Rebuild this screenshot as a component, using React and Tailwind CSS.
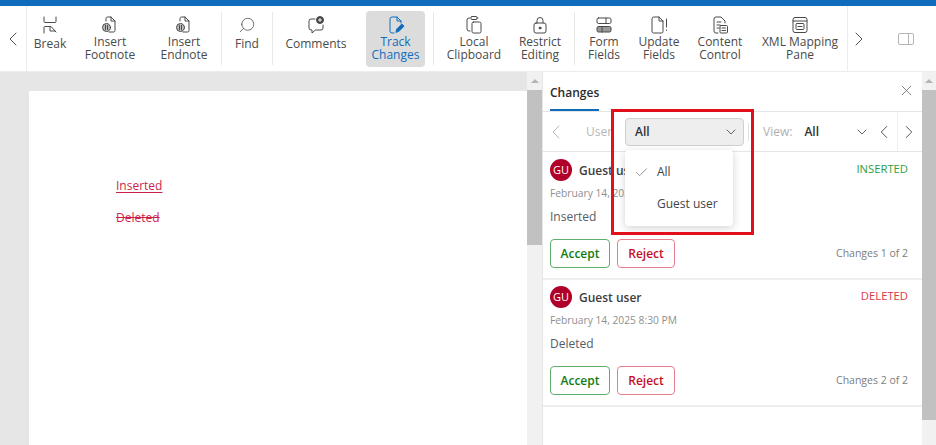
import React from "react";
import { ChevronLeft, ChevronRight, ChevronDown, Check, X, Search } from "lucide-react";

const FONT = { fontFamily: '"Open Sans", "Noto Sans", sans-serif' };

const Glyph = ({ children, color = "#4a4a4a" }) => (
  <svg width="20" height="20" viewBox="0 0 20 20" fill="none" stroke={color} strokeWidth="1" strokeLinecap="round" strokeLinejoin="round">
    {children}
  </svg>
);

const NoteIcon = () => (
  <Glyph>
    <path d="M6 6V3.5a1.5 1.5 0 0 1 1.5-1.5H11l4 4v9.5a1.5 1.5 0 0 1-1.5 1.5H9" />
    <path d="M11 2v4h4" />
    <circle cx="6.5" cy="12.5" r="4" fill="#bbb" />
    <path d="M5.5 10.5v4M7.5 10.5v4" />
  </Glyph>
);

const icons = {
  break: (
    <Glyph>
      <path d="M4 2v4.5a1 1 0 0 0 1 1h10a1 1 0 0 0 1-1V2" />
      <path d="M4 18v-5.5a1 1 0 0 1 1-1h6l5 5.5" />
      <path d="M10 12v4h5" />
    </Glyph>
  ),
  note: <NoteIcon />,
  comments: (
    <Glyph>
      <path d="M9 4H5a2 2 0 0 0-2 2v7a2 2 0 0 0 2 2h1v3l3.5-3H15a2 2 0 0 0 2-2v-3" />
      <circle cx="14" cy="5" r="3.5" fill="#444" />
      <path d="M12.5 5h3M14 3.5v3" stroke="#fff" />
    </Glyph>
  ),
  track: (
    <Glyph color="#0f6cbd">
      <path d="M8 18H6a2 2 0 0 1-2-2V4a2 2 0 0 1 2-2h5l4 4v2" />
      <path d="M11 2v4h4" />
      <path d="M10 17l.8-3 5-5 2.2 2.2-5 5z" fill="#0f6cbd" />
    </Glyph>
  ),
  clipboard: (
    <Glyph>
      <path d="M6 16H5a2 2 0 0 1-2-2V5a2 2 0 0 1 2-2h1" />
      <path d="M14 3h-1" />
      <rect x="7" y="1.5" width="6" height="3" rx="1" />
      <rect x="8" y="7" width="9" height="11" rx="1.5" />
    </Glyph>
  ),
  lock: (
    <Glyph>
      <rect x="4" y="8" width="12" height="10" rx="2" />
      <path d="M7 8V5.5a3 3 0 0 1 6 0V8" />
      <circle cx="10" cy="13" r="1" fill="#4a4a4a" />
    </Glyph>
  ),
  form: (
    <Glyph>
      <rect x="3" y="3" width="14" height="5.5" rx="1.5" />
      <rect x="3" y="11.5" width="14" height="5.5" rx="1.5" fill="#999" />
      <path d="M12 3v5.5M8 11.5V17" />
    </Glyph>
  ),
  update: (
    <Glyph>
      <path d="M3 3.5A1.5 1.5 0 0 1 4.5 2H10l4 4v10.5a1.5 1.5 0 0 1-1.5 1.5h-8A1.5 1.5 0 0 1 3 16.5z" />
      <path d="M10 2v4h4" />
      <path d="M17.5 4v8M17.5 15v.5" />
    </Glyph>
  ),
  content: (
    <Glyph>
      <path d="M8 18H6a2 2 0 0 1-2-2V4a2 2 0 0 1 2-2h5l4 4v2" />
      <path d="M7 7h4M7 10h3M7 13h2" />
      <rect x="10" y="10.5" width="7.5" height="7.5" rx="1" />
      <path d="M12 13h3.5M12 15.5h3.5" />
    </Glyph>
  ),
  xml: (
    <Glyph>
      <rect x="3" y="2.5" width="14" height="15" rx="2" />
      <path d="M3 6h14" />
      <rect x="6" y="8.5" width="8" height="6" rx="1" />
      <path d="M8 11.5h4" />
    </Glyph>
  ),
};

const Separator = () => <div className="w-px h-[53px] bg-[#e8e8e8] shrink-0" />;

const ToolButton = ({ icon, lines, width, active }) => (
  <div
    className={`flex flex-col items-center justify-start pt-[4px] shrink-0 h-[56px] rounded-sm leading-[13px] text-[12px] ${width} ${
      active ? "bg-[#dcdcdc] text-[#0f6cbd]" : "text-[#4a4a4a]"
    }`}
  >
    {icon}
    <div className={`text-center whitespace-nowrap ${lines.length === 1 ? "mt-[2px]" : ""}`}>
      {lines.map(line => (
        <div key={line}>{line}</div>
      ))}
    </div>
  </div>
);

const ChangeCard = ({ status, statusColor, date, text, count, clipped, size }) => (
  <div className={`border-b-2 border-[#eeeeee] px-[7px] shrink-0 ${size}`}>
    <div className="flex items-start justify-between h-[24px]">
      <div className="flex items-center gap-[7px]">
        <div className="w-[22px] h-[22px] rounded-full bg-[#b0002a] text-white text-[11px] flex items-center justify-center">
          GU
        </div>
        <span className="text-[12px] font-semibold text-[#3d3d3d] mt-[1px]">{clipped ? "Guest us" : "Guest user"}</span>
      </div>
      <span className="text-[11.25px] leading-[20px] mr-[7px]" style={{ color: statusColor }}>{status}</span>
    </div>
    <div className="text-[10.25px] text-[#8f8f8f] mt-[2px] leading-[16px] whitespace-nowrap">{date}</div>
    <div className="text-[12px] text-[#555c66] mt-[7px] leading-[18px]">{text}</div>
    <div className="flex items-center mt-[13px]">
      <button className="w-[60px] h-[29px] rounded-[4px] border border-[#5fae6b] text-[12px] font-semibold text-[#107c10]">
        Accept
      </button>
      <button className="w-[58px] h-[29px] ml-[7px] rounded-[4px] border border-[#e5808c] text-[12px] font-semibold text-[#c50f1f]">
        Reject
      </button>
      <span className="ml-auto mr-[7px] text-[10.5px] text-[#7d7d7d]">{count}</span>
    </div>
  </div>
);

export default function App() {
  return (
    <div className="relative w-[936px] h-[445px] overflow-hidden bg-white flex flex-col" style={FONT}>
      <div className="h-[6px] bg-[#0f6cbd] shrink-0" />

      {/* TOOLBAR */}
      <div className="h-[66px] shrink-0 flex items-center border-b border-[#ececec]">
        <div className="w-[27px] h-full flex items-center justify-center border-r border-[#ececec] shrink-0">
          <ChevronLeft size={24} strokeWidth={1} color="#555" />
        </div>
        <ToolButton icon={icons.break} lines={["Break"]} width="w-[46px]" />
        <ToolButton icon={icons.note} lines={["Insert", "Footnote"]} width="w-[74px]" />
        <ToolButton icon={icons.note} lines={["Insert", "Endnote"]} width="w-[74px]" />
        <Separator />
        <ToolButton icon={<Search size={18} strokeWidth={1} color="#444" className="-scale-x-100 my-[1px]" />} lines={["Find"]} width="w-[50px]" />
        <Separator />
        <ToolButton icon={icons.comments} lines={["Comments"]} width="w-[86px]" />
        <div className="w-[7px] shrink-0" />
        <ToolButton icon={icons.track} lines={["Track", "Changes"]} width="w-[59px]" active />
        <div className="w-[8px] shrink-0" />
        <Separator />
        <ToolButton icon={icons.clipboard} lines={["Local", "Clipboard"]} width="w-[80px]" />
        <ToolButton icon={icons.lock} lines={["Restrict", "Editing"]} width="w-[52px]" />
        <div className="w-[8px] shrink-0" />
        <Separator />
        <ToolButton icon={icons.form} lines={["Form", "Fields"]} width="w-[58px]" />
        <ToolButton icon={icons.update} lines={["Update", "Fields"]} width="w-[52px]" />
        <ToolButton icon={icons.content} lines={["Content", "Control"]} width="w-[70px]" />
        <ToolButton icon={icons.xml} lines={["XML Mapping", "Pane"]} width="w-[90px]" />
        <div className="h-full border-r border-[#ececec] shrink-0 ml-[2px]" />
        <ChevronRight size={24} strokeWidth={1} color="#555" className="-ml-[1px] shrink-0" />
        <svg width="16" height="12" viewBox="0 0 16 12" fill="none" stroke="#b5b5b5" className="ml-[27px] shrink-0">
          <rect x="0.5" y="0.5" width="15" height="11" rx="1.5" />
          <path d="M10.5 0.5v11" />
        </svg>
      </div>

      <div className="flex flex-1 min-h-0">
        {/* DOCUMENT */}
        <div className="w-[527px] bg-[#e6e6e6] pl-[29px] pt-[19px] shrink-0">
          <div className="h-full bg-white pl-[87px] pt-[86px] text-[12px] text-[#cc1f4a] leading-[18px]">
            <div className="underline underline-offset-2">Inserted</div>
            <div className="line-through mt-[14px]">Deleted</div>
          </div>
        </div>

        {/* DOC SCROLLBAR */}
        <div className="w-[15px] bg-[#f1f1f1] shrink-0 flex flex-col items-center">
          <div className="h-[8px] mt-[5px] flex items-center">
            <div className="w-0 h-0 border-x-[4px] border-x-transparent border-b-[4px] border-b-[#b5b5b5]" />
          </div>
          <div className="w-full h-[155px] mt-[5px] bg-[#c1c1c1]" />
        </div>

        {/* CHANGES PANE */}
        <div className="flex-1 border-l border-[#e6e6e6] flex flex-col min-w-0">
          <div className="h-[40px] border-b border-[#e6e6e6] relative flex shrink-0 px-[7px]">
            <div className="h-full border-b-2 border-[#0f6cbd] text-[12px] font-semibold text-[#2b2b2b] leading-[42px] w-[49px] whitespace-nowrap">
              Changes
            </div>
            <X size={17} strokeWidth={1} color="#555" className="ml-auto mt-[10px]" />
          </div>

          <div className="h-[40px] border-b border-[#e6e6e6] flex items-center shrink-0 text-[12px]">
            <ChevronLeft size={24} strokeWidth={1} color="#b8b8b8" className="ml-[1px]" />
            <span className="ml-[18px] w-[39px] text-[#b8b8b8] overflow-hidden">User</span>
            <div className="w-[119px] h-[28px] bg-[#eeeeee] border border-[#d0d0d0] rounded-[4px] flex items-center justify-between pl-[9px] pr-[4px] font-semibold text-[#333] shrink-0">
              All
              <ChevronDown size={16} strokeWidth={1.25} color="#444" />
            </div>
            <div className="w-px h-[18px] bg-[#e0e0e0] ml-[4px]" />
            <span className="ml-[14px] text-[#b0b0b0]">View:</span>
            <span className="ml-[12px] font-semibold text-[#333]">All</span>
            <ChevronDown size={16} strokeWidth={1.25} color="#444" className="ml-[35px]" />
            <ChevronLeft size={22} strokeWidth={1} color="#444" className="ml-[3px]" />
            <div className="w-px h-full bg-[#eeeeee] ml-[2px]" />
            <ChevronRight size={22} strokeWidth={1} color="#444" />
          </div>

          <ChangeCard
            status="INSERTED"
            statusColor="#2e9e46"
            date="February 14, 2025 8:30 PM"
            text="Inserted"
            count="Changes 1 of 2"
            size="h-[128px] pt-[7px]"
            clipped
          />
          <ChangeCard
            status="DELETED"
            statusColor="#dc3545"
            date="February 14, 2025 8:30 PM"
            text="Deleted"
            count="Changes 2 of 2"
            size="h-[127px] pt-[6px]"
          />
        </div>

        {/* PANE SCROLLBAR */}
        <div className="w-[14px] bg-[#f1f1f1] shrink-0 flex flex-col items-center">
          <div className="h-[8px] mt-[5px] flex items-center">
            <div className="w-0 h-0 border-x-[4px] border-x-transparent border-b-[4px] border-b-[#b5b5b5]" />
          </div>
          <div className="w-full h-[330px] mt-[5px] bg-[#c1c1c1]" />
        </div>
      </div>

      {/* USER DROPDOWN */}
      <div className="absolute left-[625px] top-[150px] w-[108px] h-[76px] bg-white rounded-[4px] shadow-[0_2px_8px_rgba(0,0,0,0.18)] text-[12px] text-[#444]">
        <div className="flex items-center h-[34px] mt-[5px]">
          <Check size={15} strokeWidth={1} color="#555" className="ml-[9px]" />
          <span className="ml-[8px]">All</span>
        </div>
        <div className="pl-[32px] leading-[30px] whitespace-nowrap">Guest user</div>
      </div>

      {/* RED CALLOUT */}
      <div className="absolute left-[611px] top-[109px] w-[143px] h-[126px] border-[3px] border-[#e3101b] pointer-events-none" />
    </div>
  );
}
